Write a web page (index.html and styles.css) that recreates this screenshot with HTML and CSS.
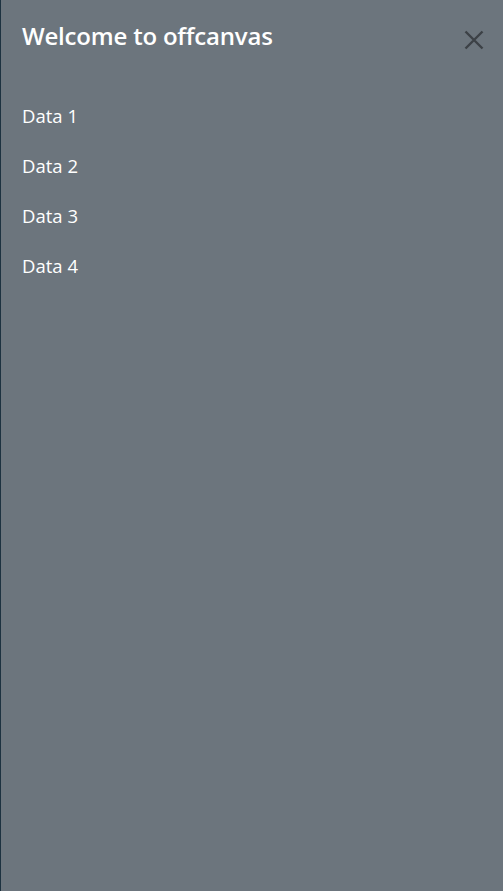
FILE: index.html
```html
<!DOCTYPE html>
<html lang="en">
<head>
<meta charset="utf-8">
<title>Offcanvas</title>
<link rel="stylesheet" href="styles.css">
</head>
<body>
<aside class="offcanvas">
  <div class="offcanvas-header">
    <h5 class="offcanvas-title">Welcome to offcanvas</h5>
    <button class="btn-close" type="button" aria-label="Close">
      <svg viewBox="0 0 20 20" width="20" height="20" aria-hidden="true">
        <path d="M1.5 1.5 L18.5 18.5 M18.5 1.5 L1.5 18.5" stroke="#3c4146" stroke-width="2.4" stroke-linecap="butt" fill="none"/>
      </svg>
    </button>
  </div>
  <div class="offcanvas-body">
    <ul class="data-list">
      <li>Data 1</li>
      <li>Data 2</li>
      <li>Data 3</li>
      <li>Data 4</li>
    </ul>
  </div>
</aside>
</body>
</html>
```
FILE: styles.css
```css
html, body {
  margin: 0;
  padding: 0;
  height: 100%;
}
body {
  background: #1d3240;
  font-family: "Open Sans", "Noto Sans", "Liberation Sans", sans-serif;
}
.offcanvas {
  box-sizing: border-box;
  margin-left: 1px;
  height: 100%;
  background: #6c757d;
  color: #ffffff;
}
.offcanvas-header {
  display: flex;
  justify-content: space-between;
  align-items: flex-start;
  padding: 22px 19px 0 21px;
}
.offcanvas-title {
  margin: 0;
  font-size: 24px;
  font-weight: 600;
  line-height: 1.2;
  letter-spacing: -0.2px;
}
.btn-close {
  margin-top: 8px;
  padding: 0;
  border: 0;
  background: transparent;
  width: 20px;
  height: 20px;
  cursor: pointer;
}
.btn-close svg {
  display: block;
}
.offcanvas-body {
  padding: 40px 21px 0 21px;
}
.data-list {
  list-style: none;
  margin: 0;
  padding: 0;
}
.data-list li {
  font-size: 18.5px;
  line-height: 50px;
}
```
